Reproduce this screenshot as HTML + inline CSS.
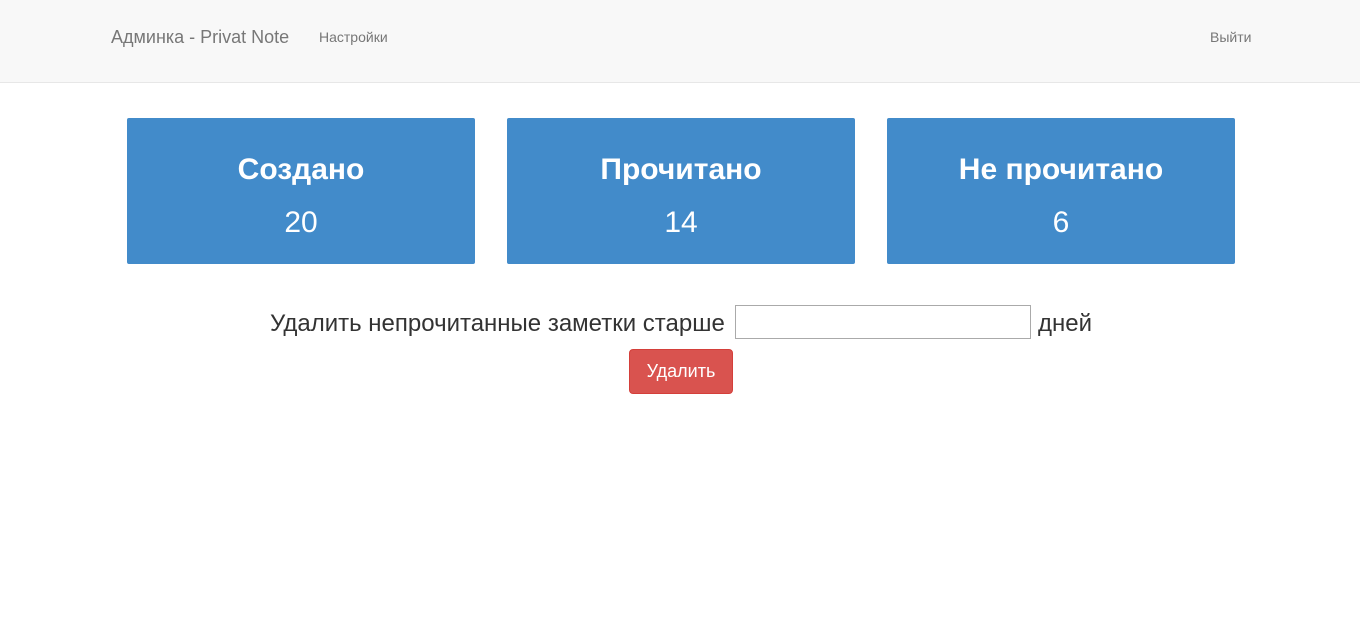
<!DOCTYPE html>
<html><head><meta charset="utf-8"><style>
*{box-sizing:border-box;margin:0;padding:0}
body{width:1360px;height:622px;background:#fff;font-family:"Liberation Sans",Arial,sans-serif;color:#333;position:relative;overflow:hidden}
.nav{position:absolute;left:0;top:0;width:1360px;height:83px;background:#f8f8f8;border-bottom:1px solid #e7e7e7}
.nav span{position:absolute;color:#777;white-space:nowrap}
.box{position:absolute;top:118px;width:348px;height:146px;background:#428bca;border-radius:2px;color:#fff;text-align:center}
.box .t{position:absolute;left:0;right:0;top:34px;font-size:30px;font-weight:bold;line-height:36px}
.box .n{position:absolute;left:0;right:0;top:87px;font-size:30px;line-height:36px}
.lbl{position:absolute;top:309px;font-size:24px;line-height:30px;color:#333;white-space:nowrap}
</style></head><body>
<div class="nav">
<span style="left:111px;top:26px;font-size:18px;line-height:22px">Админка - Privat Note</span>
<span style="left:319px;top:28px;font-size:14px;line-height:18px">Настройки</span>
<span style="left:1210px;top:28px;font-size:14px;line-height:18px">Выйти</span>
</div>
<div class="box" style="left:127px"><div class="t">Создано</div><div class="n">20</div></div>
<div class="box" style="left:507px"><div class="t">Прочитано</div><div class="n">14</div></div>
<div class="box" style="left:887px"><div class="t">Не прочитано</div><div class="n">6</div></div>
<div class="lbl" style="left:270px">Удалить непрочитанные заметки старше</div>
<div style="position:absolute;left:735px;top:305px;width:296px;height:34px;border:1px solid #aaa;background:#fff"></div>
<div class="lbl" style="left:1038px">дней</div>
<div style="position:absolute;left:629px;top:349px;width:104px;height:45px;background:#d9534f;border:1px solid #d43f3a;border-radius:4px;color:#fff;font-size:18px;line-height:43px;text-align:center">Удалить</div>
</body></html>
